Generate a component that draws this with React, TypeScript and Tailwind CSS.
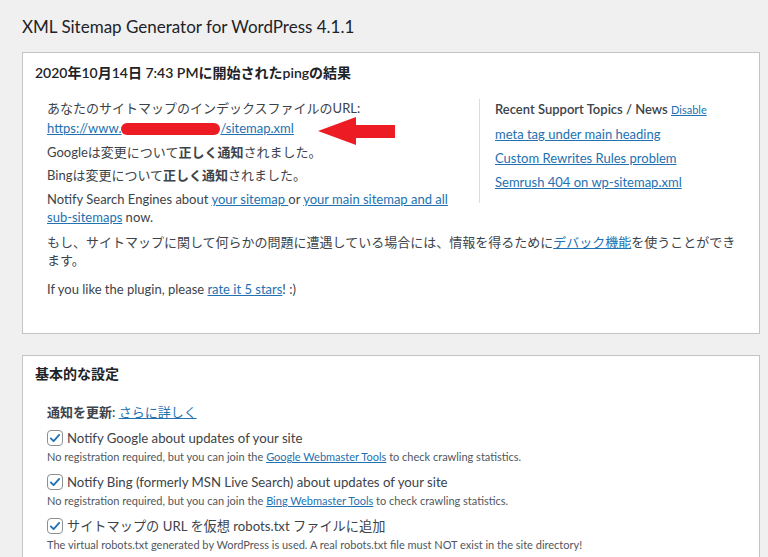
import React from "react";

const FONT = { fontFamily: 'Lato, "Noto Sans CJK JP", sans-serif' };

function Check({ label, children }: { label: React.ReactNode; children: React.ReactNode }) {
  return (
    <div>
      <div className="flex items-center h-[20px] text-[13.2px] text-[#3c434a]">
        <span className="w-[16px] h-[16px] rounded-[4px] border border-[#8c8f94] bg-white flex items-center justify-center mr-[4px] shrink-0">
          <svg width="14" height="14" viewBox="0 0 20 20">
            <path d="M4 10.5 L8 14.5 L16 5.5" fill="none" stroke="#2271b1" strokeWidth="2.6" strokeLinecap="round" strokeLinejoin="round" />
          </svg>
        </span>
        <span>{label}</span>
      </div>
      <div className="mt-[2px] text-[11px] leading-[14px] text-[#50575e]">{children}</div>
    </div>
  );
}

const A = ({ children }: { children: React.ReactNode }) => (
  <a href="#" className="text-[#2271b1] underline">{children}</a>
);

export default function App() {
  return (
    <div className="min-h-screen bg-[#f0f0f1] pl-[22px] pr-[8px] pt-[16px]" style={FONT}>
      <h2 className="text-[17px] leading-[22px] text-[#1d2327] font-normal">XML Sitemap Generator for WordPress 4.1.1</h2>

      <div className="relative mt-[14px] bg-white border border-[#c3c4c7]">
        <div className="px-[12px] pt-[10px] pb-[10px] text-[14px] leading-[19px] font-semibold text-[#1d2327]">
          2020年10月14日 7:43 PMに開始されたpingの結果
        </div>
        <div className="pl-[24px] pr-[12px] pt-[7px] pb-[35px] text-[13px] leading-[18px] text-[#3c434a]">
          <div className="flex">
            <div className="flex-1">
              <div>あなたのサイトマップのインデックスファイルのURL:</div>
              <div className="mt-[2px]">
                <a href="#" className="text-[#2271b1] underline">
                  https://www.<span className="inline-block align-middle w-[99px] h-[12px] rounded-full bg-[#ed1c24] -mt-[1px]"></span>/sitemap.xml
                </a>
              </div>
              <div className="mt-[6px]">Googleは変更について<b className="font-bold">正しく通知</b>されました。</div>
              <div className="mt-[5px]">Bingは変更について<b className="font-bold">正しく通知</b>されました。</div>
              <div className="mt-[6px]">
                Notify Search Engines about <A>your sitemap </A> or <A>your main sitemap and all</A>
                <br />
                <A>sub-sitemaps</A> now.
              </div>
            </div>
            <div className="w-[268px] self-start border-l border-[#dcdcde] pl-[15px] pt-[1px] pb-[12px]">
              <div className="font-semibold text-[#3c434a]">
                Recent Support Topics / News <a href="#" className="text-[11px] font-normal text-[#2271b1] underline">Disable</a>
              </div>
              <div className="mt-[6px]"><A>meta tag under main heading</A></div>
              <div className="mt-[6px]"><A>Custom Rewrites Rules problem</A></div>
              <div className="mt-[6px]"><A>Semrush 404 on wp-sitemap.xml</A></div>
            </div>
          </div>
          <div className="mt-[7px]">
            もし、サイトマップに関して何らかの問題に遭遇している場合には、情報を得るために<A>デバック機能</A>を使うことができます。
          </div>
          <div className="mt-[11px]">
            If you like the plugin, please <A>rate it 5 stars</A>! :)
          </div>
        </div>
        <svg className="absolute left-[295px] top-[64px]" width="77" height="30" viewBox="0 0 77 30">
          <polygon points="0,14 38,0 38,8 77,8 77,21 38,21 38,28" fill="#ed1c24" />
        </svg>
      </div>

      <div className="mt-[21px] bg-white border border-[#c3c4c7]">
        <div className="px-[12px] pt-[8px] pb-[9px] text-[14px] leading-[19px] font-semibold text-[#1d2327]">基本的な設定</div>
        <div className="pl-[24px] pr-[12px] pt-[11px] pb-[20px] text-[13px] leading-[18px] text-[#3c434a]">
          <div><b className="font-semibold">通知を更新:</b> <A>さらに詳しく</A></div>
          <div className="mt-[7px] flex flex-col gap-[8px]">
            <Check label="Notify Google about updates of your site">
              No registration required, but you can join the <A>Google Webmaster Tools</A> to check crawling statistics.
            </Check>
            <Check label="Notify Bing (formerly MSN Live Search) about updates of your site">
              No registration required, but you can join the <A>Bing Webmaster Tools</A> to check crawling statistics.
            </Check>
            <Check label="サイトマップの URL を仮想 robots.txt ファイルに追加">
              The virtual robots.txt generated by WordPress is used. A real robots.txt file must NOT exist in the site directory!
            </Check>
          </div>
        </div>
      </div>
    </div>
  );
}
